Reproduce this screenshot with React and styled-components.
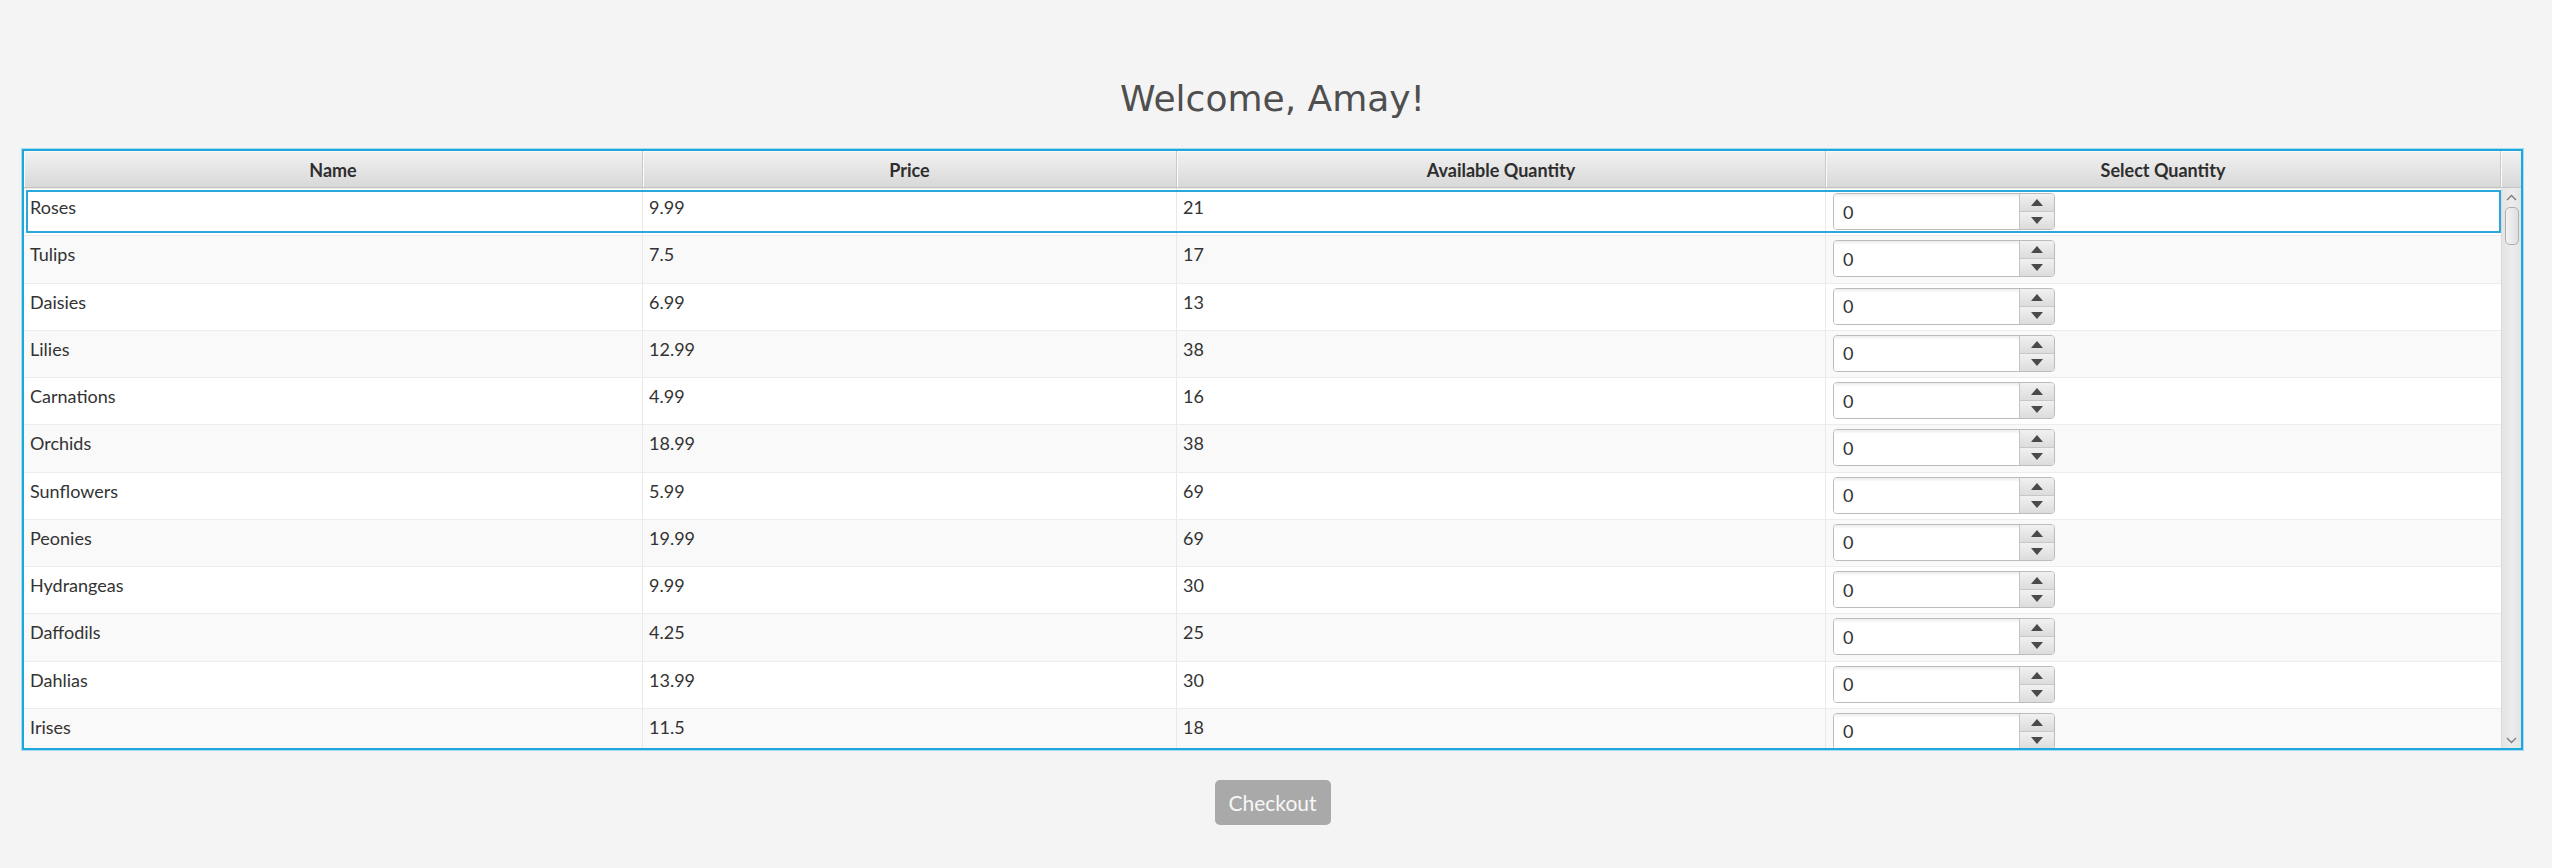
import React from 'react';
import styled, { createGlobalStyle } from 'styled-components';

const GlobalStyle = createGlobalStyle`
  html, body {
    margin: 0;
    padding: 0;
    background: #f4f4f4;
  }
  * {
    box-sizing: border-box;
  }
`

const COLS = '619px 534px 649px 1fr'

const S_main = styled.main`
  width: 2552px;
  height: 868px;
  padding: 78px 29px 0 22px;
  display: flex;
  flex-direction: column;
  font-family: Lato, "Open Sans", sans-serif;
  color: #333333;
`
const S_title = styled.h1`
  margin: 0 0 30px 0;
  font-family: "DejaVu Sans", Verdana, sans-serif;
  font-size: 36px;
  font-weight: 400;
  line-height: 41px;
  text-align: center;
  color: #4f4f4f;
`
const S_table = styled.section`
  height: 601px;
  border: solid 2px #1ea7dd;
  box-shadow: 0 0 0 1px #a8dcf0;
  background: #ffffff;
  display: flex;
  flex-direction: column;
  overflow: hidden;
`
const S_head = styled.div`
  display: grid;
  grid-template-columns: ${COLS} 20px;
  height: 37px;
  flex-shrink: 0;
  border-bottom: solid 1px #c4c4c4;
  box-shadow: 0 1px 0 #e9e9e9;
`
const S_headCell = styled.div`
  display: flex;
  align-items: center;
  justify-content: center;
  padding-top: 1px;
  background: linear-gradient(#f2f2f2, #d8d8d8);
  border-right: solid 1px #c9c9c9;
  box-shadow: inset 1px 1px 0 #fbfbfb;
  font-size: 18px;
  font-weight: 700;
  color: #2e2e2e;
  &:last-child {
    border-right: none;
  }
`
const S_body = styled.div`
  flex: 1;
  display: flex;
  margin-top: 1px;
  min-height: 0;
`
const S_rows = styled.div`
  flex: 1;
  overflow: hidden;
`
const S_row = styled.div`
  position: relative;
  display: grid;
  grid-template-columns: ${COLS};
  height: 47.25px;
  background: ${ ({odd}) => odd ? '#f9f9f9' : '#ffffff' };
  border-bottom: solid 1px #ececec;

  ${ ({focused}) => focused && `
    &::after {
      content: '';
      position: absolute;
      top: 1px;
      left: 2px;
      right: 0;
      bottom: 2px;
      border: solid 2px #2aa8dc;
      pointer-events: none;
    }
  ` }
`
const S_cell = styled.div`
  padding: 6px 0 0 6px;
  font-size: 18px;
  line-height: 24px;
  border-right: solid 1px #e9e9e9;
  &:last-child {
    border-right: none;
    padding: 4px 0 0 7px;
  }
`
const S_spinner = styled.div`
  width: 222px;
  height: 37px;
  display: flex;
  border: solid 1px #bcbcbc;
  border-radius: 4px;
  overflow: hidden;
  background: #ffffff;
`
const S_spinValue = styled.div`
  flex: 1;
  padding-left: 9px;
  display: flex;
  align-items: center;
  font-size: 18px;
  color: #333333;
  background: linear-gradient(#ececec 0, #ffffff 4px, #ffffff);
`
const S_spinArrows = styled.div`
  width: 35px;
  display: flex;
  flex-direction: column;
  border-left: solid 1px #c4c4c4;
`
const S_spinBtn = styled.div`
  flex: 1;
  display: flex;
  align-items: center;
  justify-content: center;
  background: linear-gradient(#f1f1f1, #dcdcdc);
  & + & {
    border-top: solid 1px #c8c8c8;
  }
`
const S_scroll = styled.div`
  width: 20px;
  flex-shrink: 0;
  display: flex;
  flex-direction: column;
  align-items: center;
  background: linear-gradient(90deg, #e4e4e4, #ececec 50%, #e4e4e4);
  border-left: solid 1px #dadada;
`
const S_scrollArrow = styled.div`
  height: 16px;
  display: flex;
  align-items: center;
  justify-content: center;
`
const S_thumb = styled.div`
  width: 14px;
  height: 38px;
  margin-top: 2px;
  border: solid 1px #aeaeae;
  border-radius: 5px;
  background: linear-gradient(90deg, #f4f4f4, #dedede);
`
const S_spacer = styled.div`
  flex: 1;
`
const S_footer = styled.div`
  display: flex;
  justify-content: center;
  margin-top: 30px;
`
const S_btn = styled.button`
  width: 116px;
  height: 45px;
  border: none;
  border-radius: 5px;
  background: #a9a9a9;
  color: #f7f7f7;
  font-family: Lato, "Open Sans", sans-serif;
  font-size: 21px;
  padding: 0;
  cursor: default;
`

const flowers = [
  ['Roses', '9.99', '21'],
  ['Tulips', '7.5', '17'],
  ['Daisies', '6.99', '13'],
  ['Lilies', '12.99', '38'],
  ['Carnations', '4.99', '16'],
  ['Orchids', '18.99', '38'],
  ['Sunflowers', '5.99', '69'],
  ['Peonies', '19.99', '69'],
  ['Hydrangeas', '9.99', '30'],
  ['Daffodils', '4.25', '25'],
  ['Dahlias', '13.99', '30'],
  ['Irises', '11.5', '18'],
]

const Tri = ({ down }) => (
  <svg width="12" height="7" viewBox="0 0 12 7">
    <polygon points={down ? '0,0 12,0 6,7' : '0,7 12,7 6,0'} fill="#4a4a4a" />
  </svg>
)

const Chevron = ({ down }) => (
  <svg width="11" height="7" viewBox="0 0 11 7">
    <polyline
      points={down ? '1,1 5.5,5.5 10,1' : '1,6 5.5,1.5 10,6'}
      fill="none"
      stroke="#7a7a7a"
      strokeWidth="1.3"
    />
  </svg>
)

const Spinner = ({ value }) => (
  <S_spinner>
    <S_spinValue>{value}</S_spinValue>
    <S_spinArrows>
      <S_spinBtn><Tri /></S_spinBtn>
      <S_spinBtn><Tri down /></S_spinBtn>
    </S_spinArrows>
  </S_spinner>
)

const App = () => {
  return (
  <>
    <GlobalStyle />
    <S_main>
      <S_title>{`Welcome, Amay!`}</S_title>

      <S_table>
        <S_head>
          <S_headCell>Name</S_headCell>
          <S_headCell>Price</S_headCell>
          <S_headCell>Available Quantity</S_headCell>
          <S_headCell>Select Quantity</S_headCell>
          <S_headCell />
        </S_head>

        <S_body>
          <S_rows>
            {flowers.map(([name, price, qty], i) => (
              <S_row key={name} odd={i % 2 === 1} focused={i === 0}>
                <S_cell>{name}</S_cell>
                <S_cell>{price}</S_cell>
                <S_cell>{qty}</S_cell>
                <S_cell><Spinner value="0" /></S_cell>
              </S_row>
            ))}
          </S_rows>

          <S_scroll>
            <S_scrollArrow><Chevron /></S_scrollArrow>
            <S_thumb />
            <S_spacer />
            <S_scrollArrow><Chevron down /></S_scrollArrow>
          </S_scroll>
        </S_body>
      </S_table>

      <S_footer>
        <S_btn>{`Checkout`}</S_btn>
      </S_footer>
    </S_main>
  </>
  );
}

export default App;
